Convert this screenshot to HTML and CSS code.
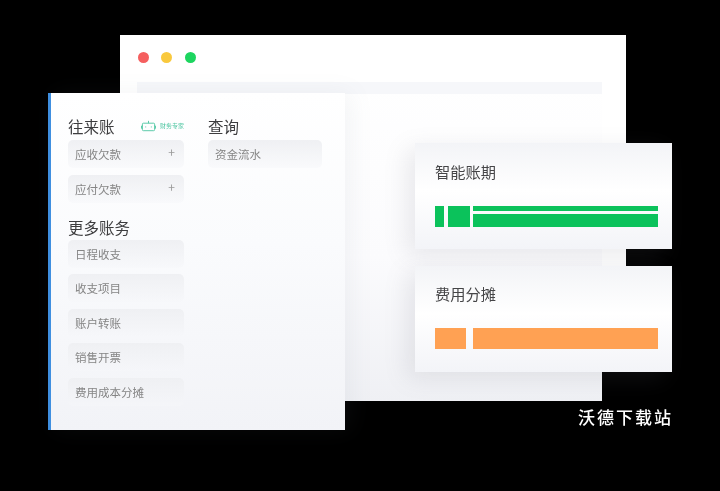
FILE: index.html
```html
<!DOCTYPE html>
<html lang="zh-CN">
<head>
<meta charset="utf-8">
<title>沃德下载站</title>
<link rel="stylesheet" href="styles.css">
</head>
<body>
<main class="stage">
  <div class="scene">
    <section class="window">
      <div class="dots"><i class="dot red"></i><i class="dot yellow"></i><i class="dot green"></i></div>
    </section>
    <section class="inner"><div class="inner-top"></div></section>

    <section class="panel">
      <div class="col col-a">
        <div class="head">
          <h2>往来账</h2>
          <div class="badge">
            <svg width="15" height="12" viewBox="0 0 16 12" fill="none" stroke="#53c7a4" stroke-width="1"><path d="M8 0.5V3"/><rect x="1.5" y="3" width="13" height="8" rx="1"/><path d="M1.5 6H0.5V8.5H1.5M14.500 6H15.500V8.500H14.500M5 6.500V7.500M11 6.500V7.500"/></svg>
            <span>财务专家</span>
          </div>
        </div>
        <div class="item plus"><span>应收欠款</span><b>+</b></div>
        <div class="item plus"><span>应付欠款</span><b>+</b></div>
        <h2 class="more">更多账务</h2>
        <div class="item"><span>日程收支</span></div>
        <div class="item"><span>收支项目</span></div>
        <div class="item"><span>账户转账</span></div>
        <div class="item"><span>销售开票</span></div>
        <div class="item"><span>费用成本分摊</span></div>
      </div>
      <div class="col col-b">
        <div class="head"><h2>查询</h2></div>
        <div class="item"><span>资金流水</span></div>
      </div>
    </section>

    <section class="card card-green">
      <h3>智能账期</h3>
      <div class="bars">
        <div class="bar green b1"></div>
        <div class="bar green b2"></div>
        <div class="stack"><div class="bar green thin"></div><div class="bar green thick"></div></div>
      </div>
    </section>

    <section class="card card-orange">
      <h3>费用分摊</h3>
      <div class="bars">
        <div class="bar orange b3"></div>
        <div class="bar orange b4"></div>
      </div>
    </section>
  </div>
  <p class="mark">沃德下载站</p>
</main>
</body>
</html>
```
FILE: styles.css
```css
* { box-sizing: border-box; margin: 0; padding: 0; }
html, body { width: 720px; height: 491px; background: #000; overflow: hidden; }
body { font-family: "Noto Sans CJK SC", "Noto Sans", sans-serif; }
.stage { position: relative; width: 720px; height: 491px; }
.scene { position: absolute; inset: 0; filter: blur(0.6px); }

.window { position: absolute; left: 120px; top: 35px; width: 506px; height: 337px; background: #fff; }
.dots { display: flex; gap: 12.500px; padding: 16.500px 0 0 17.500px; }
.dot { display: block; width: 11px; height: 11px; border-radius: 50%; }
.red { background: #f55f5f; }
.yellow { background: #f9c93e; }
.green { background: #1dd55f; }

.inner { position: absolute; left: 137px; top: 82px; width: 465px; height: 319px;
  background: linear-gradient(180deg, #fff 0%, #fbfbfd 55%, #eff0f4 100%); }
.inner-top { height: 12px; background: #f6f7fa; }

.panel { position: absolute; left: 48px; top: 93px; width: 297px; height: 337px;
  display: flex; gap: 24px; padding: 19px 0 0 17px;
  border-left: 3px solid #3f8fe0;
  background: linear-gradient(180deg, #fff 0%, #fafbfd 45%, #f2f3f7 100%);
  box-shadow: 6px 0 22px rgba(120, 125, 140, .08); }
.col { width: 116px; flex: none; }
.col-b { width: 114px; }
.head { display: flex; justify-content: space-between; align-items: center; height: 28px; }
h2 { font-size: 15.500px; line-height: 28px; font-weight: 400; color: #3d3d3f; }
.more { margin-top: 10px; height: 27px; }
.badge { display: flex; align-items: center; gap: 4px; color: #53c7a4; font-size: 6px; line-height: 12px; }
.item { display: flex; justify-content: space-between; align-items: center;
  height: 28px; margin-bottom: 6.600px; padding: 0 9px 0 7px; border-radius: 5px;
  font-size: 11.500px; color: #858585;
  background: linear-gradient(180deg, #eff0f3 0%, rgba(246, 247, 250, .5) 100%); }
.item b { font-weight: 400; font-size: 12px; color: #9a9a9a; margin-top: -5px; }

.card { position: absolute; left: 415px; width: 257px; height: 106px; padding: 15px 14px 0 20px;
  background: linear-gradient(180deg, #f3f4f7 0%, #fff 45%, #f3f4f8 100%);
  box-shadow: -8px 6px 22px rgba(110, 115, 130, .14); }
.card-green { top: 143px; }
.card-orange { top: 266px; }
.card-orange h3 { margin-top: -1px; }
h3 { font-size: 15.250px; line-height: 26px; font-weight: 400; color: #454547; }
.bars { display: flex; gap: 4px; height: 21px; margin-top: 22px; }
.bar { height: 100%; }
.bar.green { background: #0bc25b; }
.bar.orange { background: #ffa153; }
.b1 { width: 9.500px; }
.b2 { width: 21.500px; }
.b3 { width: 31px; margin-right: 3px; }
.b4 { width: 185px; }
.stack { display: flex; flex-direction: column; gap: 3px; width: 185px; margin-left: -0.500px; }
.bar.thin { height: 5px; }
.bar.thick { height: 13px; }

.mark { position: absolute; left: 578px; top: 404px; font-size: 17px; line-height: 26px; font-weight: 500;
  letter-spacing: 2px; color: #fff; white-space: nowrap; filter: blur(0.3px); }
```
